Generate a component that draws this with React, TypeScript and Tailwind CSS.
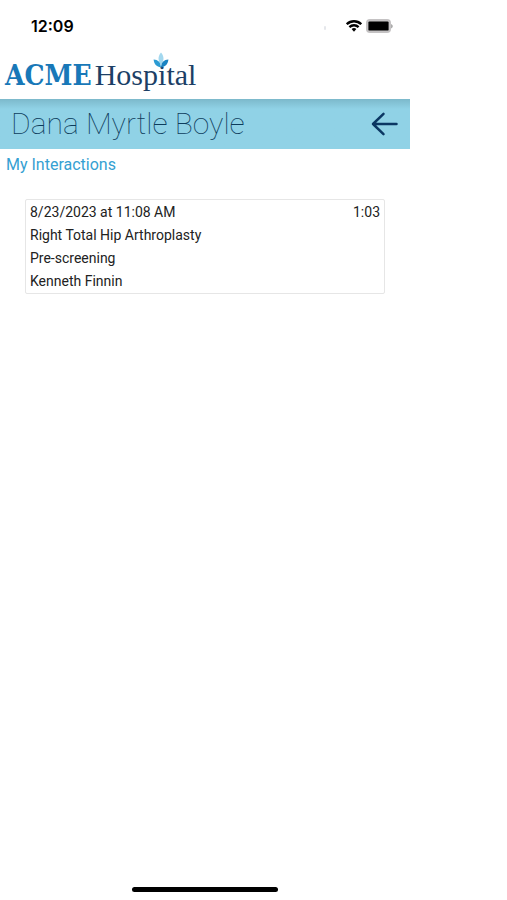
const StatusBar = () => {
  return (
    <div className="flex h-[51px] items-center justify-between pl-[31px] pr-[17px]">
      <span className="font-['Inter',sans-serif] text-base font-semibold text-black">12:09</span>
      <div className="flex items-center">
        <span className="mr-5 mt-1 h-1 w-[2px] rounded-full bg-gray-200" />
        <svg viewBox="0 0 16 12" className="mr-1 h-3 w-4" fill="none" stroke="#000" strokeWidth="2.3">
          <path d="M0.8 4.2a10.3 10.3 0 0 1 14.4 0" />
          <path d="M3.4 7.1a6.6 6.6 0 0 1 9.2 0" />
          <path d="M5.6 9.1a3.4 3.4 0 0 1 4.8 0L8 11.7z" fill="#000" stroke="none" />
        </svg>
        <svg viewBox="0 0 27 14" className="h-[14px] w-[27px]">
          <rect x="0" y="0" width="25" height="14" rx="4" fill="#c4c2c3" />
          <rect x="2.4" y="2.4" width="20.2" height="9.2" rx="1.2" fill="#000" />
          <path d="M25.2 5v4.4c1.9-.8 1.9-3.6 0-4.4z" fill="#999" />
        </svg>
      </div>
    </div>
  );
};

const Logo = () => {
  return (
    <div className="relative flex h-12 items-baseline gap-[3px] pl-[5px] pt-[9px] leading-none">
      <span className="font-['DejaVu_Serif_Condensed','DejaVu_Serif',serif] text-[28px] font-bold text-[#1878b8]">
        ACME
      </span>
      <span className="font-['Liberation_Serif',serif] text-[30px] text-[#1c3f66]">Hospital</span>
      <svg viewBox="0 0 16 17" className="absolute left-[153px] top-px h-[17px] w-4">
        <path d="M8 0.5C11 4 11.6 8 8 13 4.4 8 5 4 8 0.5z" fill="#a3d8ef" />
        <path d="M0.6 7.6C5 7.8 7.4 10 8 15.4 3.4 15 1 12 0.6 7.6z" fill="#2b9bd3" />
        <path d="M15.4 7.6C11 7.8 8.6 10 8 15.4c4.6-.4 7-3.4 7.4-7.8z" fill="#1b84c2" />
      </svg>
    </div>
  );
};

const App = () => {
  const interactions = [
    {
      id: 1,
      date: '8/23/2023 at 11:08 AM',
      duration: '1:03',
      procedure: 'Right Total Hip Arthroplasty',
      stage: 'Pre-screening',
      person: 'Kenneth Finnin'
    }
  ];

  return (
    <div className="min-h-screen bg-white font-['Roboto',sans-serif]">
      <div className="flex min-h-screen w-full max-w-[410px] flex-col">
        <header>
          <StatusBar />
          <Logo />
        </header>

        <div className="flex h-[50px] items-center justify-between bg-[#90d2e6] bg-linear-to-b from-[#7cb9cb] to-[#90d2e6] to-20% pl-[11px] pr-3">
          <h1 className="text-[30px] font-thin leading-none text-[#0d3c5c]">Dana Myrtle Boyle</h1>
          <button type="button" aria-label="Back" className="cursor-pointer">
            <svg
              viewBox="0 0 27 24"
              className="h-6 w-[27px]"
              fill="none"
              stroke="#0b3763"
              strokeWidth="2.5"
              strokeLinecap="round"
              strokeLinejoin="round"
            >
              <path d="M25.5 12H2M12.5 1.8L2 12l10.5 10.2" />
            </svg>
          </button>
        </div>

        <main className="grow">
          <h2 className="px-[6px] pt-1 text-base text-[#35a0d2]">My Interactions</h2>
          <div className="mt-[22px] space-y-4 px-[25px]">
            {interactions.map((item) => (
              <div
                key={item.id}
                className="rounded-xs border border-[#e6e6e6] px-1 pt-px text-sm leading-[23px] text-[#222]"
              >
                <div className="flex justify-between">
                  <p>{item.date}</p>
                  <p>{item.duration}</p>
                </div>
                <p>{item.procedure}</p>
                <p>{item.stage}</p>
                <p>{item.person}</p>
              </div>
            ))}
          </div>
        </main>

        <div className="flex justify-center pb-2">
          <div className="h-[5px] w-[146px] rounded-full bg-black" />
        </div>
      </div>
    </div>
  );
};

export default App;
